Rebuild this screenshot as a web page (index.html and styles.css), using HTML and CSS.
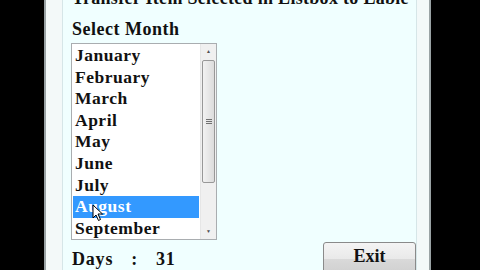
FILE: index.html
```html
<!DOCTYPE html>
<html>
<head>
<meta charset="utf-8">
<link rel="stylesheet" href="styles.css">
</head>
<body>
<div class="window">
  <div class="client">
    <div class="title">Transfer Item Selected in Listbox to Lable</div>
    <div class="label">Select Month</div>
    <div class="listbox">
      <div class="items">
        <div class="item">January</div>
        <div class="item">February</div>
        <div class="item">March</div>
        <div class="item">April</div>
        <div class="item">May</div>
        <div class="item">June</div>
        <div class="item">July</div>
        <div class="item selected">August</div>
        <div class="item">September</div>
      </div>
      <div class="scrollbar">
        <div class="arrow up">&#9650;</div>
        <div class="track"><div class="thumb"><span class="grip"></span></div></div>
        <div class="arrow down">&#9660;</div>
      </div>
      <svg class="cursor" width="12" height="18" viewBox="0 0 12 18"><path d="M1 1 L1 14 L4 11 L6.5 16.5 L8.5 15.5 L6 10 L10.5 10 Z" fill="#fff" stroke="#000" stroke-width="1"/></svg>
    </div>
    <div class="bottom">
      <div class="days"><span>Days</span><span class="colon">:</span><span>31</span></div>
      <button class="exit">Exit</button>
    </div>
  </div>
</div>
</body>
</html>
```
FILE: styles.css
```css
html, body {
  margin: 0;
  padding: 0;
  background: #000;
  width: 480px;
  height: 270px;
  overflow: hidden;
}
body {
  display: flex;
  padding-left: 44px;
  box-sizing: border-box;
}
.window {
  width: 387px;
  flex: none;
  height: 270px;
  box-sizing: border-box;
  background: #f3f9f9;
  border-left: 2px solid #9aa3a5;
  border-right: 2px solid #9aa3a5;
  padding: 0 12px 0 16px;
  display: flex;
}
.client {
  flex: 1;
  min-width: 0;
  background: #f0ffff;
  border-left: 1px solid #d6e6e8;
  border-right: 1px solid #d6e6e8;
  padding-left: 9px;
  font-family: "Liberation Serif", "DejaVu Serif", serif;
  font-weight: bold;
  color: #111;
  display: flex;
  flex-direction: column;
}
.title {
  font-size: 18px;
  line-height: 24px;
  margin-top: -14px;
  white-space: nowrap;
  letter-spacing: 0.3px;
}
.label {
  font-size: 18px;
  line-height: 20px;
  margin-top: 9px;
  letter-spacing: 0.5px;
}
.listbox {
  position: relative;
  margin-top: 4px;
  margin-left: -1px;
  width: 146px;
  height: 197px;
  box-sizing: border-box;
  border: 1px solid #a9adb0;
  background: #fff;
  display: flex;
}
.items {
  flex: 1;
  padding: 1px 1px 0 1px;
}
.item {
  font-size: 17.5px;
  height: 21.6px;
  line-height: 21.6px;
  padding-left: 2px;
  white-space: nowrap;
  letter-spacing: 0.5px;
}
.item.selected {
  background: #3399ff;
  color: #fff;
}
.scrollbar {
  width: 15px;
  background: #f0f0f0;
  border-left: 1px solid #e6e6e6;
  display: flex;
  flex-direction: column;
}
.arrow {
  height: 15px;
  font-size: 5px;
  line-height: 15px;
  text-align: center;
  color: #505050;
}
.track {
  flex: 1;
  padding: 1px 1px;
}
.thumb {
  height: 123px;
  box-sizing: border-box;
  border: 1px solid #989898;
  border-radius: 2px;
  background: linear-gradient(to right, #f2f2f2, #dcdcdc);
  display: flex;
  align-items: center;
  justify-content: center;
}
.grip {
  width: 6px;
  height: 5px;
  background: repeating-linear-gradient(to bottom, #707070 0 1px, transparent 1px 2px);
}
.cursor {
  position: absolute;
  left: 20px;
  top: 160px;
}
.bottom {
  display: flex;
  justify-content: space-between;
  align-items: flex-start;
  margin-top: 2px;
  padding-right: 0;
}
.days {
  font-size: 18px;
  line-height: 20px;
  margin-top: 7px;
  display: flex;
  letter-spacing: 0.8px;
}
.colon {
  margin: 0 18px 0 18px;
}
.exit {
  width: 93px;
  height: 34px;
  border: 1px solid #8a8a8a;
  border-radius: 3px;
  background: linear-gradient(to bottom, #f4f4f4 0%, #e9e9e9 50%, #d9d9d9 51%, #cfcfcf 100%);
  font-family: "Liberation Serif", "DejaVu Serif", serif;
  font-weight: bold;
  font-size: 18px;
  color: #111;
  padding: 0 0 6px 0;
  margin-top: 0;
}
```
